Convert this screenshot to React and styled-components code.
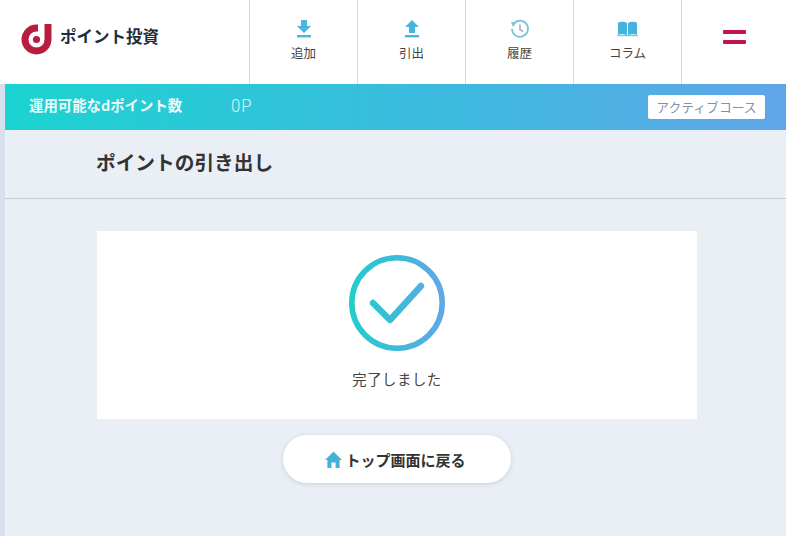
import React from 'react'
import styled, { createGlobalStyle } from 'styled-components'

const GlobalStyle = createGlobalStyle`
  html, body {
    margin: 0;
    padding: 0;
    background: #eaeff6;
    overflow: hidden;
  }
  body {
    font-family: "Noto Sans CJK JP", "Noto Sans", sans-serif;
    color: #333;
  }
`

const Page = styled.div`
  width: 786px;
  height: 536px;
  overflow: hidden;
`

const Header = styled.header`
  display: flex;
  height: 84px;
  background: #fff;
`

const Brand = styled.div`
  width: 249px;
  display: flex;
  align-items: center;
  gap: 8px;
  padding: 0 0 12px 20px;
  box-sizing: border-box;
  font-size: 16.5px;
  font-weight: 700;
  color: #1d2f3f;
`

const LogoSlot = styled.div`
  display: flex;
  padding-top: 6px;
`

const NavItem = styled.div`
  width: 108px;
  box-sizing: border-box;
  border-left: 1px solid #d9d9d9;
  display: flex;
  flex-direction: column;
  align-items: center;
  padding-top: 17px;
  font-size: 12.5px;
  line-height: 18px;
  color: #444;
`

const NavIcon = styled.div`
  height: 24px;
  margin-bottom: 3px;
  display: flex;
  align-items: center;
  justify-content: center;
`

const MenuCell = styled.div`
  flex: 1;
  border-left: 1px solid #d9d9d9;
  display: flex;
  flex-direction: column;
  align-items: center;
  gap: 6px;
  padding-top: 30px;
  box-sizing: border-box;
`

const MenuBar = styled.span`
  width: 23px;
  height: 4px;
  border-radius: 1px;
  background: #c0174a;
`

const Body = styled.div`
  border-left: 5px solid #d8dfef;
  height: 452px;
`

const Banner = styled.div`
  height: 46px;
  display: flex;
  align-items: center;
  padding: 0 21px 0 24px;
  background: linear-gradient(90deg, #1bd4d0 0%, #3fb8e0 60%, #60a6e8 100%);
  color: #fff;
`

const BannerLabel = styled.div`
  width: 202px;
  margin-bottom: 5px;
  font-size: 14.4px;
  font-weight: 700;
  color: #eefafa;
`

const BannerValue = styled.div`
  flex: 1;
  margin-bottom: 4px;
  font-family: "Roboto", sans-serif;
  font-size: 19px;
  font-weight: 300;
  letter-spacing: 1px;
  color: #d8f6f8;
  transform: scaleX(0.88);
  transform-origin: left center;
`

const CourseBadge = styled.div`
  width: 117px;
  height: 24px;
  border-radius: 2px;
  background: #fff;
  color: #7b93ad;
  font-size: 12.8px;
  line-height: 23px;
  text-align: center;
`

const TitleBar = styled.div`
  height: 69px;
  box-sizing: border-box;
  border-bottom: 1px solid #c5cbd9;
  padding-left: 91px;
  display: flex;
  align-items: center;
`

const Title = styled.h1`
  margin: 0 0 5px;
  font-size: 19.7px;
  font-weight: 700;
  color: #333;
`

const Content = styled.main`
  padding: 32px 0 0 92px;
`

const Card = styled.section`
  width: 600px;
  height: 188px;
  background: #fff;
  display: flex;
  flex-direction: column;
  align-items: center;
  padding-top: 24px;
  box-sizing: border-box;
`

const CardText = styled.p`
  margin: 18px 0 0;
  font-size: 14.4px;
  line-height: 20px;
  letter-spacing: 0.5px;
  color: #444;
`

const BackRow = styled.div`
  width: 600px;
  display: flex;
  justify-content: center;
  padding-top: 16px;
`

const BackButton = styled.button`
  width: 228px;
  height: 48px;
  border: 0;
  border-radius: 24px;
  background: #fff;
  box-shadow: 0 1px 4px rgba(90, 110, 140, 0.25);
  display: flex;
  align-items: center;
  justify-content: center;
  gap: 3px;
  padding: 0 3px 0 0;
  font-family: inherit;
  font-size: 15px;
  font-weight: 700;
  color: #333;
`

const Logo = () => (
  <svg width="32" height="31" viewBox="0 0 32 31">
    <path
      d="M31.5 0v15.5A15 15 0 1 1 16.5 0.5h1.5v7h-1.5a8 8 0 1 0 8 8V0z"
      fill="#b81c3e"
    />
    <circle cx="16.5" cy="15.5" r="3.6" fill="#b81c3e" />
  </svg>
)

const DownloadIcon = () => (
  <svg width="16" height="20" viewBox="0 0 16 20">
    <path d="M5 1h6v6h4l-7 7-7-7h4z" fill="#49b5dc" />
    <rect x="1" y="16" width="14" height="2.4" fill="#49b5dc" />
  </svg>
)

const UploadIcon = () => (
  <svg width="16" height="20" viewBox="0 0 16 20">
    <path d="M8 1l7 7h-4v6H5V8H1z" fill="#49b5dc" />
    <rect x="1" y="16" width="14" height="2.4" fill="#49b5dc" />
  </svg>
)

const HistoryIcon = () => (
  <svg width="20" height="20" viewBox="0 0 20 20" fill="none">
    <path d="M3.2 5.5A8 8 0 1 1 2 10" stroke="#7fc4dc" strokeWidth="1.8" />
    <path d="M1 3l5.5 0.6L3 8z" fill="#7fc4dc" />
    <path d="M10 5.5V10.5l3.2 2" stroke="#9dbccb" strokeWidth="1.8" />
  </svg>
)

const BookIcon = () => (
  <svg width="21" height="16" viewBox="0 0 21 16">
    <path d="M1 1.5C4 0.2 7.6 0.4 10 2v12.5C7.6 13 4 12.8 1 13.8z" fill="#45b4dc" />
    <path d="M20 1.5C17 0.2 13.4 0.4 11 2v12.5c2.4-1.5 6-1.7 9-.7z" fill="#45b4dc" />
    <rect x="0" y="14" width="21" height="1.2" fill="#7cc8e4" />
  </svg>
)

const CheckCircle = () => (
  <svg width="96" height="96" viewBox="0 0 96 96" fill="none">
    <defs>
      <linearGradient id="checkGrad" gradientUnits="userSpaceOnUse" x1="0" y1="0" x2="96" y2="0">
        <stop offset="0" stopColor="#22cdca" />
        <stop offset="0.5" stopColor="#3dbbd8" />
        <stop offset="1" stopColor="#62a6e8" />
      </linearGradient>
    </defs>
    <circle cx="48" cy="48" r="45.2" stroke="url(#checkGrad)" strokeWidth="5.6" />
    <path
      d="M24 48L41 65L72 31"
      stroke="url(#checkGrad)"
      strokeWidth="6.4"
      strokeLinecap="round"
      strokeLinejoin="round"
    />
  </svg>
)

const HomeIcon = () => (
  <svg width="17" height="17" viewBox="0 0 17 17">
    <path d="M8.5 0.5L17 9h-2.4v8h-4v-5.4H6.4V17h-4V9H0z" fill="#45b0d8" />
  </svg>
)

const navItems = [
  { label: '追加', icon: <DownloadIcon /> },
  { label: '引出', icon: <UploadIcon /> },
  { label: '履歴', icon: <HistoryIcon /> },
  { label: 'コラム', icon: <BookIcon /> },
]

export default function App() {
  return (
    <Page>
      <GlobalStyle />
      <Header>
        <Brand>
          <LogoSlot>
            <Logo />
          </LogoSlot>
          ポイント投資
        </Brand>
        {navItems.map(item => (
          <NavItem key={item.label}>
            <NavIcon>{item.icon}</NavIcon>
            {item.label}
          </NavItem>
        ))}
        <MenuCell>
          <MenuBar />
          <MenuBar />
        </MenuCell>
      </Header>
      <Body>
        <Banner>
          <BannerLabel>運用可能なdポイント数</BannerLabel>
          <BannerValue>0P</BannerValue>
          <CourseBadge>アクティブコース</CourseBadge>
        </Banner>
        <TitleBar>
          <Title>ポイントの引き出し</Title>
        </TitleBar>
        <Content>
          <Card>
            <CheckCircle />
            <CardText>完了しました</CardText>
          </Card>
          <BackRow>
            <BackButton>
              <HomeIcon />
              トップ画面に戻る
            </BackButton>
          </BackRow>
        </Content>
      </Body>
    </Page>
  )
}
